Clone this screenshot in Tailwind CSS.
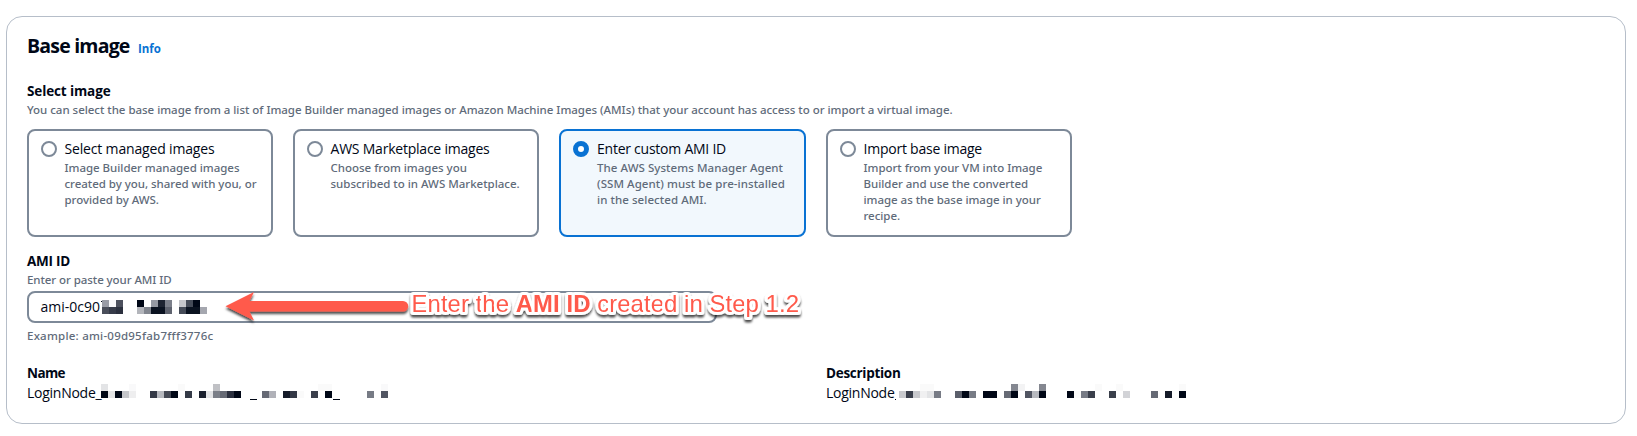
<!DOCTYPE html>
<html lang="en">
<head>
<meta charset="utf-8">
<title>Base image</title>
<script src="https://cdn.jsdelivr.net/npm/@tailwindcss/browser@4"></script>
</head>
<body class="bg-white font-['Open_Sans',sans-serif] text-[14px] leading-5 text-[#000716] whitespace-nowrap">
<main class="relative ml-[6px] mt-4 h-[408px] w-[1620px] rounded-[16px] border border-[#b6bec9] px-5 pt-4">
  <header class="flex h-6 items-baseline gap-[8px] pt-px leading-6">
    <h1 class="w-[103px] text-[19.5px] font-bold tracking-[-0.8px]">Base image</h1>
    <a class="text-[11.5px] font-bold text-[#0972d3]">Info</a>
  </header>

  <section class="mt-6">
    <h2 class="text-[13.5px] font-bold tracking-[-0.12px]">Select image</h2>
    <p class="pt-px text-[11.5px] leading-4 font-medium font-['Noto_Sans',sans-serif] tracking-[-0.028px] text-[#5f6b7a]">You can select the base image from a list of Image Builder managed images or Amazon Machine Images (AMIs) that your account has access to or import a virtual image.</p>
    <div class="mt-[11px] grid h-[108px] w-[1045px] grid-cols-[246px_246px_247px_246px] gap-5">
      <label class="flex gap-[7.500px] rounded-[8px] border-2 border-[#7d8998] px-3 py-2">
        <span class="mt-[2px] size-4 shrink-0 rounded-full border-2 border-[#7d8998]"></span>
        <span>
          <span class="block tracking-[-0.164px]">Select managed images</span>
          <span class="block pt-px text-[11.5px] leading-4 font-medium font-['Noto_Sans',sans-serif] tracking-[-0.03px] text-[#5f6b7a]">Image Builder managed images<br>created by you, shared with you, or<br>provided by AWS.</span>
        </span>
      </label>
      <label class="flex gap-[7.500px] rounded-[8px] border-2 border-[#7d8998] px-3 py-2">
        <span class="mt-[2px] size-4 shrink-0 rounded-full border-2 border-[#7d8998]"></span>
        <span>
          <span class="block tracking-[-0.222px]">AWS Marketplace images</span>
          <span class="block pt-px text-[11.5px] leading-4 font-medium font-['Noto_Sans',sans-serif] tracking-[-0.01px] text-[#5f6b7a]">Choose from images you<br>subscribed to in AWS Marketplace.</span>
        </span>
      </label>
      <label class="flex gap-2 rounded-[8px] border-2 border-[#0972d3] bg-[#f2f8fd] px-3 py-2">
        <span class="mt-[2px] size-4 shrink-0 rounded-full border-[5px] border-[#0972d3] bg-white"></span>
        <span>
          <span class="block tracking-[-0.243px]">Enter custom AMI ID</span>
          <span class="block pt-px text-[11.5px] leading-4 font-medium font-['Noto_Sans',sans-serif] tracking-[0.06px] text-[#5f6b7a]">The AWS Systems Manager Agent<br>(SSM Agent) must be pre-installed<br>in the selected AMI.</span>
        </span>
      </label>
      <label class="flex gap-[7.500px] rounded-[8px] border-2 border-[#7d8998] px-3 py-2">
        <span class="mt-[2px] size-4 shrink-0 rounded-full border-2 border-[#7d8998]"></span>
        <span>
          <span class="block tracking-[-0.233px]">Import base image</span>
          <span class="block pt-px text-[11.5px] leading-4 font-medium font-['Noto_Sans',sans-serif] tracking-[-0.035px] text-[#5f6b7a]">Import from your VM into Image<br>Builder and use the converted<br>image as the base image in your<br>recipe.</span>
        </span>
      </label>
    </div>
  </section>

  <section class="mt-[14px]">
    <h2 class="text-[13.5px] font-bold tracking-[-0.25px]">AMI ID</h2>
    <p class="pt-px text-[11.5px] leading-4 font-medium font-['Noto_Sans',sans-serif] tracking-[-0.07px] text-[#5f6b7a]">Enter or paste your AMI ID</p>
    <div class="mt-[3px] flex h-8 w-[690px] items-center rounded-[8px] border-2 border-[#7d8998] pl-[11.5px]">
      <span class="w-[61.5px]">ami-0c90</span>
      <svg class="h-[14px] w-[98px]" viewBox="0 0 14 2" preserveAspectRatio="none" shape-rendering="crispEdges" data-mosaic="0,0,9a9ca6 1,0,f8f8fa 2,0,4c505d 5,0,000716 7,0,9599a3 8,0,1e2432 9,0,7b7f8a 11,0,c5c6cb 12,0,454b58 13,0,000716 0,1,4a4e5a 1,1,363b49 2,1,2b303e 5,1,b3b5bb 6,1,82868f 7,1,0a1220 8,1,0a1220 9,1,5f636f 11,1,454b58 12,1,0a1220 13,1,0a1220 14,1,a5a7af"><rect x="-.15" y=".15" width=".15" height=".15" fill="#000716"/></svg>
    </div>
    <p class="mt-[5px] text-[11.5px] leading-4 font-medium font-['Noto_Sans',sans-serif] tracking-[0.23px] text-[#5f6b7a]">Example: ami-09d95fab7fff3776c</p>
  </section>

  <section class="mt-[19px] grid grid-cols-[799px_1fr]">
    <div>
      <h2 class="text-[13.5px] font-bold tracking-[-0.59px]">Name</h2>
      <div class="flex">
        <span class="w-[74px] tracking-[-0.26px]">LoginNode_</span>
        <svg class="mt-[1px] h-[14px] w-[287px]" viewBox="0 0 41 2" preserveAspectRatio="none" shape-rendering="crispEdges" data-mosaic="0,0,e3e4e6 4,0,f9f9fa 11,0,fafafa 16,0,c0c1c5 31,0,fafafa 32,0,fafafa 40,0,f9f9fa 0,1,000716 1,1,e3e4e6 2,1,000716 3,1,c5c6ca 4,1,eeeeef 7,1,343946 8,1,b7b9bf 9,1,454955 10,1,000716 12,1,343a47 14,1,1a202e 15,1,e3e4e6 16,1,7b7f88 17,1,666a75 18,1,2a2f3e 19,1,000716 23,1,666a75 24,1,b0b1b8 26,1,151b29 27,1,333845 28,1,fafafa 30,1,3a3f4b 32,1,000716 38,1,777b85 40,1,515562"><rect x="21.3" y="2.15" width="1" height=".18" fill="#000716"/><rect x="33.1" y="2.15" width="1" height=".18" fill="#000716"/></svg>
      </div>
    </div>
    <div>
      <h2 class="text-[13.5px] font-bold tracking-[-0.28px]">Description</h2>
      <div class="flex">
        <span class="w-[73px] tracking-[-0.26px]">LoginNode</span>
        <svg class="mt-[1px] h-[14px] w-[287px]" viewBox="0 0 41 2" preserveAspectRatio="none" shape-rendering="crispEdges" data-mosaic="3,0,fafafa 4,0,fafafa 16,0,848790 17,0,f3f3f4 20,0,848790 28,0,fafafa 31,0,fafafa 40,0,fafafa 0,1,c8c9cd 1,1,3a3f4b 2,1,c8c9cd 3,1,f0f0f1 4,1,e3e4e6 5,1,777b85 8,1,5b5f6b 9,1,000716 10,1,777b85 12,1,000716 13,1,000716 15,1,666a75 16,1,000716 18,1,515562 19,1,b7b9bf 20,1,000716 24,1,000716 25,1,fafafa 26,1,777b85 27,1,3a3f4b 30,1,3a3f4b 32,1,d2d3d7 36,1,666a75 38,1,151b29 40,1,000716"><rect x="-.58" y="2.15" width=".15" height=".15" fill="#000716"/></svg>
      </div>
    </div>
  </section>

  <!-- Callout laid over the AMI ID field -->
  <svg class="absolute left-[213px] top-[263px] h-[60px] w-[600px]" viewBox="220 280 600 60">
    <defs><filter id="s" x="-5%" y="-30%" width="110%" height="180%"><feDropShadow dx="0" dy="2.5" stdDeviation="1.2" flood-color="#000" flood-opacity=".7"/></filter></defs>
    <path filter="url(#s)" fill="#ff5a4b" d="M225.5 306.200 254 292 249.500 301H403a5 5 0 0 1 0 10.500H249.500L254 320.500Z"/>
    <text filter="url(#s)" x="411.5" y="312.4" font-size="24" textLength="387.500" class="font-['Liberation_Sans',sans-serif]" fill="#ff5a4b" stroke="#fff" stroke-width="6" stroke-linejoin="round" paint-order="stroke">Enter the <tspan font-weight="700">AMI ID</tspan> created in Step 1.2</text>
  </svg>
</main>
<script>
// Each mosaic entry is "column,row,colour".
document.querySelectorAll('[data-mosaic]').forEach(svg => {
  svg.style.overflow = 'visible';
  for (const cell of svg.dataset.mosaic.split(' ')) {
    const [x, y, c] = cell.split(',');
    const r = document.createElementNS('http://www.w3.org/2000/svg', 'rect');
    r.setAttribute('x', x); r.setAttribute('y', y);
    r.setAttribute('width', 1); r.setAttribute('height', 1);
    r.setAttribute('fill', '#' + c);
    svg.append(r);
  }
});
</script>
</body>
</html>
